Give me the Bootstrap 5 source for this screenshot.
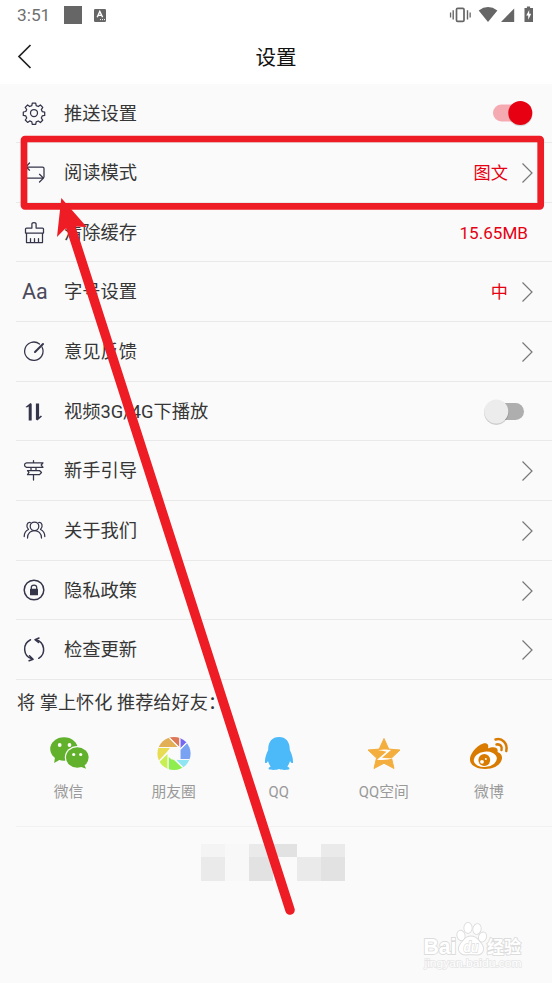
<!DOCTYPE html>
<html lang="zh-CN">
<head>
<meta charset="utf-8">
<meta name="viewport" content="width=device-width, initial-scale=1">
<title>设置</title>
<link href="https://cdn.jsdelivr.net/npm/bootstrap@5.3.0/dist/css/bootstrap.min.css" rel="stylesheet">
<style>
body{font-family:Roboto,"Noto Sans CJK SC",sans-serif;background:#fafafa;color:#363636;width:552px;height:983px;overflow:hidden}
svg{display:block;flex:none}
.topbar{height:84px;background:#fff}
.status{height:30px;padding:2px 17px 0 17px;color:#707070;font-size:17.3px}
.status svg{position:relative;top:-1px}
.titlebar{height:54px;padding-left:17px}
.titlebar h1{font-size:20.5px;color:#111;margin:1px 0 0;font-weight:400;line-height:30px}
.setting{height:59.67px;padding:1.4px 18px 0 5px;margin-left:16px;border-bottom:1px solid #e9e9e9;font-size:18.3px;line-height:28px}
.setting:first-child{height:59px}
.ico{width:26px;height:26px;margin-right:17px;color:#34344a;flex:none}
.ico svg{fill:none;stroke:currentColor;stroke-width:1.25;stroke-linecap:round;stroke-linejoin:round}
.val{color:#e60012;font-size:17.2px}
.mb{margin-right:6px;font-size:17.1px}
.aa{font-size:21.5px;line-height:25px;width:27px;margin-left:1px;margin-right:15px;color:#4a4a5c}
.toggle{width:41px;height:28px}
.toggle-off{margin-right:9px}
.notice-icons{margin-left:13px}
.tip{height:46px;padding-left:17px;font-size:18.2px;line-height:46px}
.share{width:105.1px;font-size:14.8px;color:#999;line-height:22px}
.share svg{margin-bottom:8px}
.shares{margin-left:16px;padding-top:9px;height:101px;border-bottom:1px solid #f1f1f1;margin-bottom:17px}
.mosaic{width:144px;height:37px;margin-left:201px}
</style>
<script src="https://cdn.jsdelivr.net/npm/bootstrap@5.3.0/dist/js/bootstrap.bundle.min.js"></script>
</head>
<body class="position-relative">
<header class="topbar">
  <div class="status d-flex align-items-center">
    <span>3:51</span>
    <svg class="notice-icons me-auto" width="46" height="20" viewBox="0 0 46 20"><path fill="#666" d="M1 1h18v18H1z"/><rect x="31" y="4" width="12" height="13" rx="1.3" fill="#666"/><path d="M34.2 12.200 36.800 6.400 39.600 12.200M35.200 10.400h3.500" stroke="#fff" stroke-width="1.400" fill="none"/><path d="M37 14.600h5" stroke="#fff" stroke-dasharray="1 1"/></svg>
    <svg width="86" height="20" viewBox="0 0 86 20" fill="#666"><rect x="7.500" y="3.400" width="7.500" height="13" rx="1.200" fill="none" stroke="#666" stroke-width="1.700"/><path d="M3.500 5.200h1.400v9.400H3.500zM.9 7.400h1.300v5H.9zM17.800 5.200h1.400v9.400h-1.400zM20.500 7.400h1.300v5h-1.300zM29.700 5.400Q39-1.200 48.400 5.400L39 17zM52 17 65.200 3.500V17zM75.500 3h2.400V1.500h3.200V3H84V17h-8.500z"/><path fill="#fff" d="m80.200 5-3 5.500h2v4.300l3-6h-2z"/></svg>
  </div>
  <div class="titlebar d-flex align-items-center position-relative">
    <svg width="16" height="28" viewBox="0 0 16 28" fill="none" stroke="#222" stroke-width="1.700"><path d="M13.500 2 2 13.500 13.500 25"/></svg>
    <h1 class="position-absolute start-0 end-0 text-center">设置</h1>
  </div>
</header>
<svg class="d-none"><symbol id="chev" viewBox="0 0 14 22"><path d="m2.500 1.500 9.500 9.500-9.500 9.500" fill="none" stroke="#777" stroke-width="1.200"/></symbol></svg>
<main>
<section>
  <div class="setting d-flex align-items-center"><span class="ico"><svg width="26" height="26" viewBox="0 1 26 26"><circle cx="13" cy="13" r="3.500"/><path d="M11.300 3.100h3.400l.5 2.500 2.100.9L19.400 5l2.400 2.400-1.500 2.200.9 2 2.500.5v3.300l-2.500.5-.9 2.100 1.400 2.200-2.300 2.300-2.100-1.500-2.100.9-.5 2.400h-3.400l-.5-2.500-2.100-.9-2.100 1.500-2.300-2.400 1.400-2-.9-2.100-2.500-.5v-3.400l2.500-.5.9-2L4.200 7.400 6.600 5l2.100 1.500 2.100-.9z"/></svg></span>推送设置
    <svg class="ms-auto toggle" viewBox="-1 1 41 28"><rect x="-1" y="5.500" width="35" height="17" rx="8.500" fill="#f5aab2"/><circle cx="26.300" cy="15" r="12.200" fill="#000" opacity=".13"/><circle cx="26.300" cy="14" r="12" fill="#e60012"/></svg></div>
  <div class="setting d-flex align-items-center"><span class="ico"><svg width="26" height="26" viewBox="0 0 26 26"><path d="M8.500 3 5 6.700l3.500 3.500M6 7h15.500q1.500 0 1.500 1.500V17M5 9.500V18h17M18.500 14.300l4 3.800-4 3.900"/></svg></span>阅读模式
    <span class="val ms-auto me-2 pe-1">图文</span><svg width="14" height="22"><use href="#chev"/></svg></div>
  <div class="setting d-flex align-items-center"><span class="ico"><svg width="26" height="26" viewBox="0 0 26 26"><path d="M4.500 13v-4q0-1 1-1h5.400V4q0-1.500 2.100-1.500t2.100 1.500V8h6.400q1 0 1 1v4zM5.500 13v9.500h16V13M9.500 22v-3.500M13.500 22v-3.500M17.500 22v-3.500"/></svg></span>清除缓存
    <span class="val mb ms-auto">15.65MB</span></div>
  <div class="setting d-flex align-items-center"><span class="ico aa">Aa</span>字号设置
    <span class="val ms-auto me-2 pe-1">中</span><svg width="14" height="22"><use href="#chev"/></svg></div>
  <div class="setting d-flex align-items-center"><span class="ico"><svg width="26" height="26" viewBox="0 .5 26 26"><path d="M18.500 5.500A9.200 9.200 0 1 0 21 8.500"/><path d="m14 13.500 8-8" stroke-width="2"/></svg></span>意见反馈
    <svg class="ms-auto" width="14" height="22"><use href="#chev"/></svg></div>
  <div class="setting d-flex align-items-center"><span class="ico"><svg width="26" height="26" viewBox="0 0 26 26"><path stroke="none" fill="currentColor" d="M4.500 8 9.500 4l1.200 1V21.500H7.700V7.500L6 8.500zM21 17.500l-4.600 4-1.500-1V4.500h3.200v13.500l1.800-1.500z"/></svg></span>视频3G/4G下播放
    <svg class="ms-auto toggle toggle-off" viewBox="0 .5 41 28"><rect x="7" y="5.500" width="33" height="17" rx="8.500" fill="#aeaeae"/><circle cx="12.300" cy="15.200" r="12.200" fill="#000" opacity=".18"/><circle cx="12.300" cy="14" r="12" fill="#ececec"/></svg></div>
  <div class="setting d-flex align-items-center"><span class="ico"><svg width="26" height="26" viewBox="0 0 26 26"><path d="M12.500 2.500v2M5.500 4.800H22l-1.800 2.200L22 9.300H5.500Q3.500 8.700 3.500 7t2-2.200zM10 9.500v3M15 9.500v3M6.500 12.500h12l2 2-2 2.200h-12l1.500-2.200zM12.500 17v5"/></svg></span>新手引导
    <svg class="ms-auto" width="14" height="22"><use href="#chev"/></svg></div>
  <div class="setting d-flex align-items-center"><span class="ico"><svg width="26" height="26" viewBox="0 0 26 26"><circle cx="13.500" cy="8.300" r="4.300"/><path d="M6.500 20C6.500 15 10 12.500 13.500 12.500s7 2.500 7 7.500M9.300 4.500C6 3.800 4.500 8.500 7.500 11.500 4.500 12.800 3.200 15.500 3.200 18.500M17.700 4.500c3.300-.7 4.800 4 1.800 7 3 1.300 4.300 4 4.300 7"/></svg></span>关于我们
    <svg class="ms-auto" width="14" height="22"><use href="#chev"/></svg></div>
  <div class="setting d-flex align-items-center"><span class="ico"><svg width="26" height="26" viewBox="0 .5 26 26"><circle cx="13" cy="12.500" r="9.800" stroke-width="1.500"/><rect x="9" y="11.200" width="8" height="6.500" rx=".5" fill="currentColor" stroke="none"/><path d="M10.300 12V9.800q0-2.300 2.700-2.300t2.700 2.300V12"/></svg></span>隐私政策
    <svg class="ms-auto" width="14" height="22"><use href="#chev"/></svg></div>
  <div class="setting d-flex align-items-center"><span class="ico"><svg width="26" height="26" viewBox="0 .5 26 26"><path d="M9.500 3.200A10.300 10.300 0 0 0 10.800 22.300M8.500 19.300l3.600 3.400-4 1.500M17.700 21.800A10.200 10.200 0 0 0 15 3.200M17.500 6 14 3.200l4-1.700" stroke-width="1.500"/></svg></span>检查更新
    <svg class="ms-auto" width="14" height="22"><use href="#chev"/></svg></div>
</section>
<div class="tip">将 掌上怀化 推荐给好友：</div>
<div class="shares d-flex">
  <div class="share d-flex flex-column align-items-center">
    <svg width="40" height="38" viewBox="0 0 40 38"><g fill="#61b12c"><ellipse cx="15" cy="14" rx="13.800" ry="11.700"/><path d="m6 22-.8 6L12 24z"/></g><ellipse cx="28.300" cy="22.500" rx="12.500" ry="11.500" fill="#fafafa"/><g fill="#61b12c"><ellipse cx="28.300" cy="22.500" rx="11.300" ry="10.300"/><path d="m31 31.500 6 2.300-2-5z"/></g><g fill="#fff"><circle cx="10.700" cy="10" r="1.900"/><circle cx="20.500" cy="10" r="1.900"/><circle cx="24.700" cy="19.500" r="1.600"/><circle cx="31.700" cy="19.500" r="1.600"/></g></svg>微信</div>
  <div class="share d-flex flex-column align-items-center">
    <svg width="38" height="38" viewBox="-19 -18.500 38 38"><clipPath id="lens"><circle r="16.600"/></clipPath><g clip-path="url(#lens)" stroke="#fafafa" stroke-width="1.100" stroke-linejoin="round"><path fill="#dc7857" d="M-7-18H6V-5z"/><path fill="#7467f2" d="M6-20V-4L19-17z"/><path fill="#79a3f2" d="M19-17 6-4V6H20z"/><path fill="#8fe6f2" d="M20 6H5L.500 5.500 15 20z"/><path fill="#8eee50" d="M15 20-6 0V20z"/><path fill="#c8ef52" d="M-6 20V-1L-19 12z"/><path fill="#e8dc52" d="M-19 12-4-4V-6H-20z"/><path fill="#e2ae56" d="M-20-6H5L-7-18z"/></g><path fill="#fafafa" d="M-2.700-6.300H2.700L6-3v5.500L2.500 6h-5L-6 2.700v-5.500z"/></svg>朋友圈</div>
  <div class="share d-flex flex-column align-items-center">
    <svg width="32" height="38" viewBox="0 0 32 38" fill="#4cb9f9"><path d="M5.200 15C5 7 9 2 16 2s11 5 10.800 13c2 4.200 3.500 8 3.200 12.700-1 1.200-2.300-.5-3-1.700-.6 2.400-1.700 4.300-2.800 5.500 2 .8 2.600 1.800 2 2.800-2 1-8.500.8-10.200-.2-1.700 1-8.200 1.200-10.200.2-.6-1 0-2 2-2.800C6.700 30.300 5.600 28.400 5 26c-.7 1.200-2 2.900-3 1.700C1.700 23 3.200 19.200 5.200 15z"/></svg>QQ</div>
  <div class="share d-flex flex-column align-items-center">
    <svg width="36" height="38" viewBox="0 0 36 38"><path fill="#f4ae3e" stroke="#f4ae3e" stroke-width="1" stroke-linejoin="round" d="m18 3.500 4.800 10.600 11.200.9-8.500 8L28 33.500l-10-5.300-10 5.300L10.500 23 2 15l11.200-.9z"/><path fill="#fff" d="M12 15.300q7-1.700 13-.2L16 22.800q5 .7 12 .2-8 2.700-17 1.700l9.500-8q-4-.9-8.500-1.400z"/></svg>QQ空间</div>
  <div class="share d-flex flex-column align-items-center">
    <svg width="40" height="38" viewBox="0 0 40 38"><path fill="#d87b00" d="M1 24.500C1 17 12 6.500 17.500 8.500c2 .8 2 3 1.500 4.800 4-1.700 11-2.200 9.500 3.700 9 3 4.500 17-12.500 17C7.500 34 1 30.200 1 24.500z"/><ellipse cx="16.300" cy="24.300" rx="11.600" ry="7.600" transform="rotate(-7 16.300 24.300)" fill="#fff"/><circle cx="15.300" cy="25" r="5.900" fill="#d87b00"/><circle cx="13" cy="26.800" r="1.900" fill="#fff"/><circle cx="16.800" cy="24" r="1" fill="#fff"/><path d="M26.500 4.500C33 2.500 39 8.500 37.300 16M27.500 9.500c3.700-.7 6 2 5 5.500" fill="none" stroke="#d87b00" stroke-width="2.500" stroke-linecap="round"/></svg>微博</div>
</div>
<svg class="mosaic" viewBox="0 0 144 37"><path fill="#f4f4f4" d="M0 0h24v13H0z"/><path fill="#eaeaea" d="M0 13h24v24H0zM96 13h24v24H96zM120 0h24v13h-24zM48 0h24v13H48z"/><path fill="#f8f8f8" d="M24 0h24v37H24z"/><path fill="#e2e2e2" d="M48 13h24v24H48zM72 0h24v13H72zM120 13h24v24h-24z"/></svg>
</main>
<svg class="position-absolute top-0 start-0" width="552" height="983" viewBox="0 0 552 983">
  <g font-family="'Liberation Sans',sans-serif" fill="#fff" stroke="#dcdcdc" stroke-width="1.800" paint-order="stroke" font-weight="700">
    <text x="423.500" y="953.500" font-size="22" textLength="33" lengthAdjust="spacingAndGlyphs">Bai</text>
    <ellipse cx="461" cy="935.500" rx="3.600" ry="4.900" transform="rotate(-15 461 935.500)"/><ellipse cx="468" cy="928" rx="3.700" ry="5"/><ellipse cx="477" cy="929" rx="3.700" ry="5" transform="rotate(12 477 929)"/><ellipse cx="482.500" cy="937" rx="3.500" ry="4.700" transform="rotate(20 482.500 937)"/><path d="M471 936.500c6 0 7 4 10 7 4 5 2 11-4 11-4 0-8-.5-11 0-7 0-9-6-5-11 3-3 4-7 10-7z"/>
    <text x="463.500" y="951.500" font-size="14.500" font-style="italic" textLength="15" lengthAdjust="spacingAndGlyphs" stroke-width="1.400">du</text>
    <text x="487" y="952.500" font-size="17" textLength="34" font-family="'Noto Sans CJK SC',sans-serif">经验</text>
    <text x="424.500" y="967" font-size="11.500" textLength="97" lengthAdjust="spacingAndGlyphs" font-weight="400" stroke="#e6e6e6" stroke-width="1.500">jingyan.baidu.com</text>
  </g>
  <g fill="none" stroke="#ee1c24"><rect x="24" y="139" width="516.700" height="67.300" rx="1" stroke-width="6.700" stroke-linejoin="round"/><path d="M71 228 290 910" stroke-width="9.500" stroke-linecap="round"/></g>
  <path fill="#ee1c24" d="m61.300 198 25.500 29-14-.5-8 2.500-7.800 8z"/>
</svg>
</body>
</html>
